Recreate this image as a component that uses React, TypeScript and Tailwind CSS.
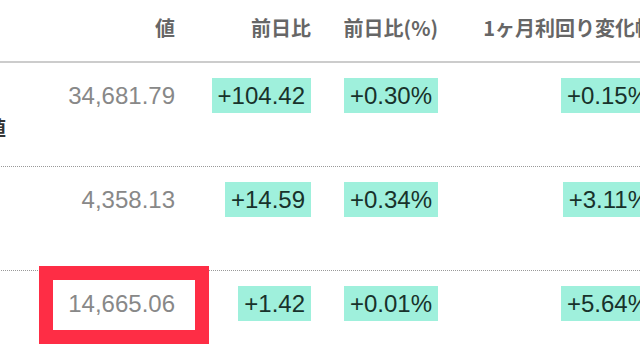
const rows = [
  { name: ['日経平均', '日経平均株価の値'], value: '34,681.79', diff: '+104.42', pct: '+0.30%', month: '+0.15%' },
  { name: ['TOPIX'], value: '4,358.13', diff: '+14.59', pct: '+0.34%', month: '+3.11%' },
  { name: ['S&P'], value: '14,665.06', diff: '+1.42', pct: '+0.01%', month: '+5.64%', marked: true },
]

function Badge({ children }: { children: string }) {
  return (
    <span className="inline-block bg-[#9ff0dc] px-[6px] h-[35px] leading-[35px] text-[24px] text-[#18322b]">
      {children}
    </span>
  )
}

export default function App() {
  return (
    <div className="w-[640px] h-[360px] overflow-hidden bg-white font-['Liberation_Sans','Noto_Sans_CJK_JP',sans-serif]">
      <div className="w-[840px] -ml-[154px]">
        {/* header */}
        <div className="flex h-[63px] pt-[16px] border-b-2 border-[#cccccc] text-[20px] leading-[24px] font-bold text-[#666666] font-['Noto_Sans_CJK_JP',sans-serif]">
          <div className="w-[164px]" />
          <div className="w-[175px] pr-[10px] text-right">値</div>
          <div className="w-[136px] pr-[10px] text-right">前日比</div>
          <div className="w-[127px] pr-[10px] text-right">前日比(%)</div>
          <div className="w-[217px] pr-[10px] text-right whitespace-nowrap">1ヶ月利回り変化幅</div>
        </div>

        {rows.map((r) => (
          <div key={r.value} className="flex h-[104px] pt-[15px] border-b border-dotted border-[#999999]">
            <div className="w-[164px] text-left text-[20px] leading-[28px] pt-[8px] font-bold text-[#333333] whitespace-nowrap font-['Noto_Sans_CJK_JP',sans-serif]">
              {r.name.map((n) => (
                <div key={n}>{n}</div>
              ))}
            </div>
            <div className="relative w-[175px] pr-[10px] text-right">
              <span className="text-[24px] leading-[35px] text-[#888888]">{r.value}</span>
              {r.marked && (
                <div className="absolute left-[29px] top-[-20px] w-[170px] h-[78px] border-[14px] border-[#fe2d45]" />
              )}
            </div>
            <div className="w-[136px] pr-[10px] text-right">
              <Badge>{r.diff}</Badge>
            </div>
            <div className="w-[127px] pr-[10px] text-right">
              <Badge>{r.pct}</Badge>
            </div>
            <div className="w-[217px] pr-[10px] text-right">
              <Badge>{r.month}</Badge>
            </div>
          </div>
        ))}
      </div>
    </div>
  )
}
